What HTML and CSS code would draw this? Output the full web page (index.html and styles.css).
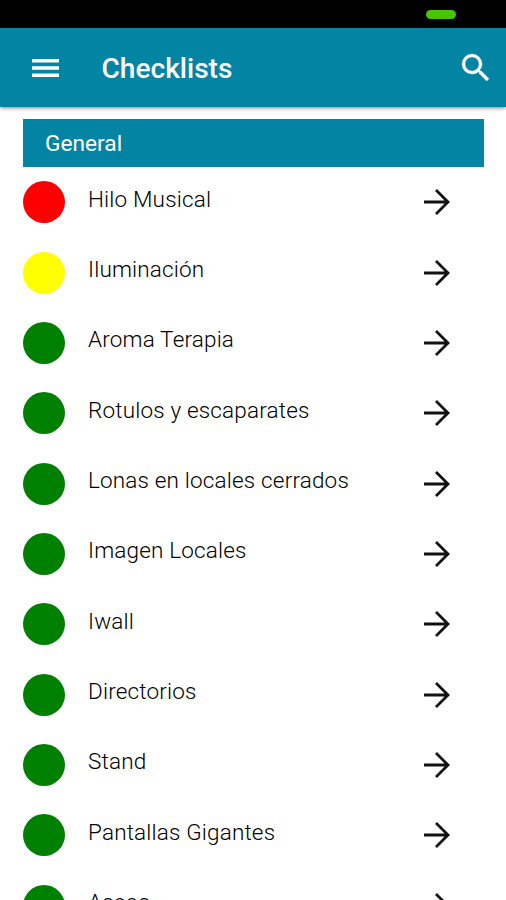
FILE: index.html
```html
<!DOCTYPE html>
<html lang="es">
<head>
<meta charset="utf-8">
<title>Checklists</title>
<link rel="stylesheet" href="styles.css">
</head>
<body>
<svg class="defs" width="0" height="0"><symbol id="arrow" viewBox="0 0 26 26"><path d="M0 13H24M12 1L24 13L12 25" fill="none" stroke="#111" stroke-width="2.8"/></symbol></svg>
<div class="status"><span class="pill"></span></div>
<header class="bar">
<svg class="menu" viewBox="0 0 27 18"><path d="M0 1.7H27M0 9H27M0 16.3H27" stroke="#fff" stroke-width="3.4"/></svg>
<h1 class="title">Checklists</h1>
<svg class="search" viewBox="3 3 17.49 17.49"><path fill="#fff" stroke="#fff" stroke-width=".2" d="M15.5 14h-.79l-.28-.27A6.471 6.471 0 0 0 16 9.5 6.5 6.5 0 1 0 9.5 16c1.61 0 3.09-.59 4.23-1.57l.27.28v.79l5 4.99L20.49 19l-4.99-5zm-6 0C7.01 14 5 11.99 5 9.5S7.01 5 9.5 5 14 7.01 14 9.5 11.99 14 9.5 14z"/></svg>
</header>
<main class="content">
<h2 class="section">General</h2>
<ul class="list">
<li class="row"><span class="dot red"></span><span class="label">Hilo Musical</span><svg class="arrow"><use href="#arrow"/></svg></li>
<li class="row"><span class="dot yellow"></span><span class="label">Iluminación</span><svg class="arrow"><use href="#arrow"/></svg></li>
<li class="row"><span class="dot"></span><span class="label">Aroma Terapia</span><svg class="arrow"><use href="#arrow"/></svg></li>
<li class="row"><span class="dot"></span><span class="label">Rotulos y escaparates</span><svg class="arrow"><use href="#arrow"/></svg></li>
<li class="row"><span class="dot"></span><span class="label">Lonas en locales cerrados</span><svg class="arrow"><use href="#arrow"/></svg></li>
<li class="row"><span class="dot"></span><span class="label">Imagen Locales</span><svg class="arrow"><use href="#arrow"/></svg></li>
<li class="row"><span class="dot"></span><span class="label">Iwall</span><svg class="arrow"><use href="#arrow"/></svg></li>
<li class="row"><span class="dot"></span><span class="label">Directorios</span><svg class="arrow"><use href="#arrow"/></svg></li>
<li class="row"><span class="dot"></span><span class="label">Stand</span><svg class="arrow"><use href="#arrow"/></svg></li>
<li class="row"><span class="dot"></span><span class="label">Pantallas Gigantes</span><svg class="arrow"><use href="#arrow"/></svg></li>
<li class="row"><span class="dot"></span><span class="label">Aseos</span><svg class="arrow"><use href="#arrow"/></svg></li>
</ul>
</main>
</body>
</html>
```
FILE: styles.css
```css
* { box-sizing: border-box; }
body { margin: 0; height: 900px; overflow: hidden; display: flex; flex-direction: column; background: #fff; color: #000; font-family: Roboto, sans-serif; }
.defs { display: none; }
.status { flex: none; height: 28px; background: #000; display: flex; justify-content: flex-end; padding: 10px 50px 0 0; }
.pill { width: 30px; height: 9px; border-radius: 5px; background: #48c400; }
.bar { flex: none; height: 79px; display: flex; align-items: center; padding: 0 17px 0 32px; background: #0284a2; color: #fff; box-shadow: 0 1px 4px rgba(0,0,0,.5); }
.menu { width: 27px; height: 18px; }
.title { flex: 1; margin: 2px 0 0 42.5px; font-size: 28.1px; line-height: 32px; font-weight: 500; }
.search { width: 27px; height: 27px; overflow: visible; }
.content { flex: none; padding: 12px 22px 0 23px; }
.section { margin: 0; height: 48.3px; padding-left: 22px; background: #0284a2; color: #fff; font-size: 22.7px; line-height: 49px; font-weight: 400; }
.list { margin: 0; padding: 0; list-style: none; }
.row { display: flex; align-items: center; height: 70.32px; padding-right: 34px; }
.dot { width: 42px; height: 42px; border-radius: 50%; background: #008000; }
.red { background: #f00; }
.yellow { background: #ff0; }
.label { flex: 1; margin: -7.5px 0 0 23px; font-size: 22.5px; line-height: 28px; font-weight: 300; letter-spacing: .17px; white-space: nowrap; }
.arrow { width: 26px; height: 26px; }
```
